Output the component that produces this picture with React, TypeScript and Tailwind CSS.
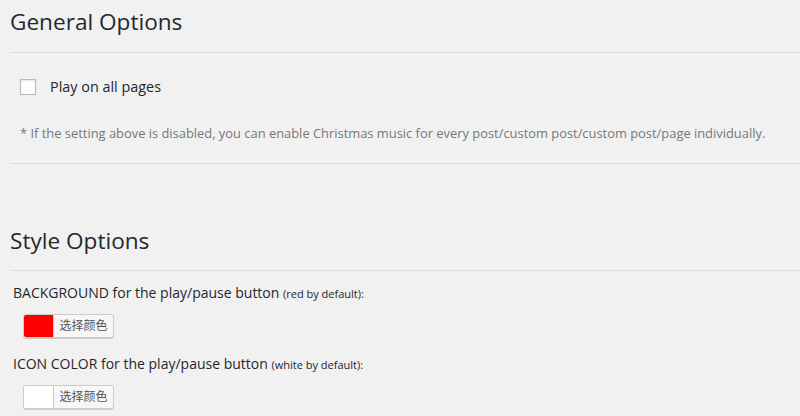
const ColorButton = ({ color }: { color: string }) => (
    <button className="flex h-[24px] w-[91px] items-stretch rounded-[3px] border border-[#cccccc] bg-[#f7f7f7] shadow-[0_1px_0_#cccccc] overflow-hidden">
        <span className="w-[30px] border-r border-[#cccccc]" style={{ backgroundColor: color }} />
        <span className="flex flex-1 items-center justify-center text-[12px] text-[#555555]">选择颜色</span>
    </button>
)

const App = () => {
    return (
        <div className="h-[416px] w-[800px] overflow-hidden bg-[#f1f1f1] pl-[10px] text-[#23282d] font-['Open_Sans','Noto_Sans_CJK_SC',sans-serif]">
            <h1 className="pt-[7px] text-[22.6px] font-normal leading-[29px]">General Options</h1>
            <div className="mt-[16px] border-t border-[#dddddd]" />

            <div className="mt-[25px] flex items-center pl-[10px]">
                <span className="h-[16px] w-[16px] border border-[#b4b9be] bg-white shadow-[inset_0_1px_2px_rgba(0,0,0,0.1)]" />
                <span className="ml-[14px] text-[14.4px] leading-[18px]">Play on all pages</span>
            </div>

            <p className="mt-[29px] pl-[10px] text-[12.9px] leading-[16px] text-[#777777]">
                * If the setting above is disabled, you can enable Christmas music for every post/custom post/custom post/page individually.
            </p>
            <div className="mt-[22px] border-t border-[#dddddd]" />

            <h2 className="mt-[62px] text-[22.6px] font-normal leading-[29px]">Style Options</h2>
            <div className="mt-[15px] border-t border-[#dddddd]" />

            <div className="pl-[3px]">
                <p className="mt-[13px] text-[14px] leading-[18px]">
                    BACKGROUND for the play/pause button <span className="text-[11px]">(red by default):</span>
                </p>
                <div className="mt-[11px] pl-[10px]">
                    <ColorButton color="#ff0000" />
                </div>

                <p className="mt-[17px] text-[14px] leading-[18px]">
                    ICON COLOR for the play/pause button <span className="text-[11px]">(white by default):</span>
                </p>
                <div className="mt-[11px] pl-[10px]">
                    <ColorButton color="#ffffff" />
                </div>
            </div>
        </div>
    )
}

export default App
